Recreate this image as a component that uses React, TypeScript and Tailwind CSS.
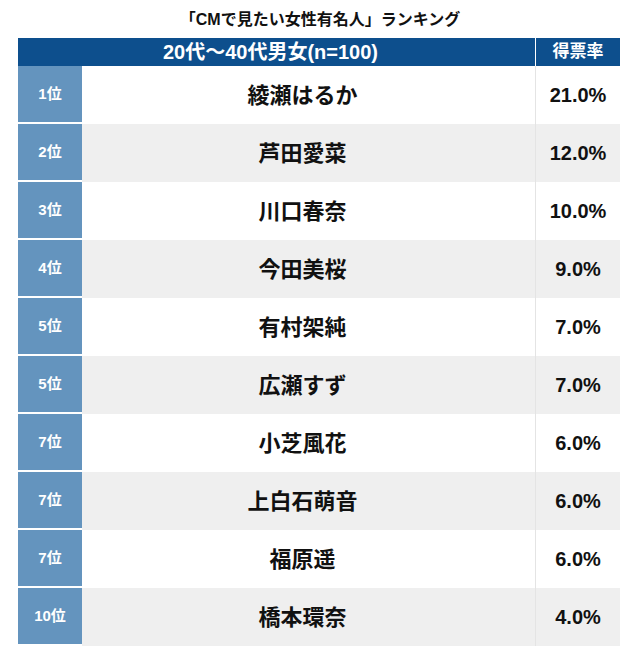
const rows = [
  { rank: "1位", name: "綾瀬はるか", pct: "21.0%" },
  { rank: "2位", name: "芦田愛菜", pct: "12.0%" },
  { rank: "3位", name: "川口春奈", pct: "10.0%" },
  { rank: "4位", name: "今田美桜", pct: "9.0%" },
  { rank: "5位", name: "有村架純", pct: "7.0%" },
  { rank: "5位", name: "広瀬すず", pct: "7.0%" },
  { rank: "7位", name: "小芝風花", pct: "6.0%" },
  { rank: "7位", name: "上白石萌音", pct: "6.0%" },
  { rank: "7位", name: "福原遥", pct: "6.0%" },
  { rank: "10位", name: "橋本環奈", pct: "4.0%" },
];

export default function App() {
  return (
    <div className="w-[640px] h-[666px] bg-white font-['Liberation_Sans','Noto_Sans_CJK_JP',sans-serif] text-[#111]">
      <h1 className="h-[38px] pt-[2px] flex items-center justify-center text-[16px] font-bold">
        「CMで見たい女性有名人」ランキング
      </h1>

      <div className="mx-[18px] w-[602px]">
        <div className="flex h-[28px] bg-[#0d4f8d] text-white font-bold">
          <div className="w-[517px] flex items-center justify-center text-[20px] pr-[12px]">
            20代〜40代男女(n=100)
          </div>
          <div className="flex-1 border-l border-white flex items-center justify-center text-[17px]">
            得票率
          </div>
        </div>

        {rows.map((r, i) => (
          <div
            key={i}
            className={`flex h-[58px] ${i % 2 === 1 ? "bg-[#efefef]" : "bg-white"}`}
          >
            <div className="w-[64px] bg-[#6494be] border-b-2 border-white flex items-center justify-center text-white text-[15px] font-bold">
              {r.rank}
            </div>
            <div className="w-[453px] flex items-center justify-center text-[22px] font-bold pr-[12px]">
              {r.name}
            </div>
            <div className="flex-1 border-l border-[#e4e4e4] flex items-center justify-center text-[20px] font-bold">
              {r.pct}
            </div>
          </div>
        ))}
      </div>
    </div>
  );
}
